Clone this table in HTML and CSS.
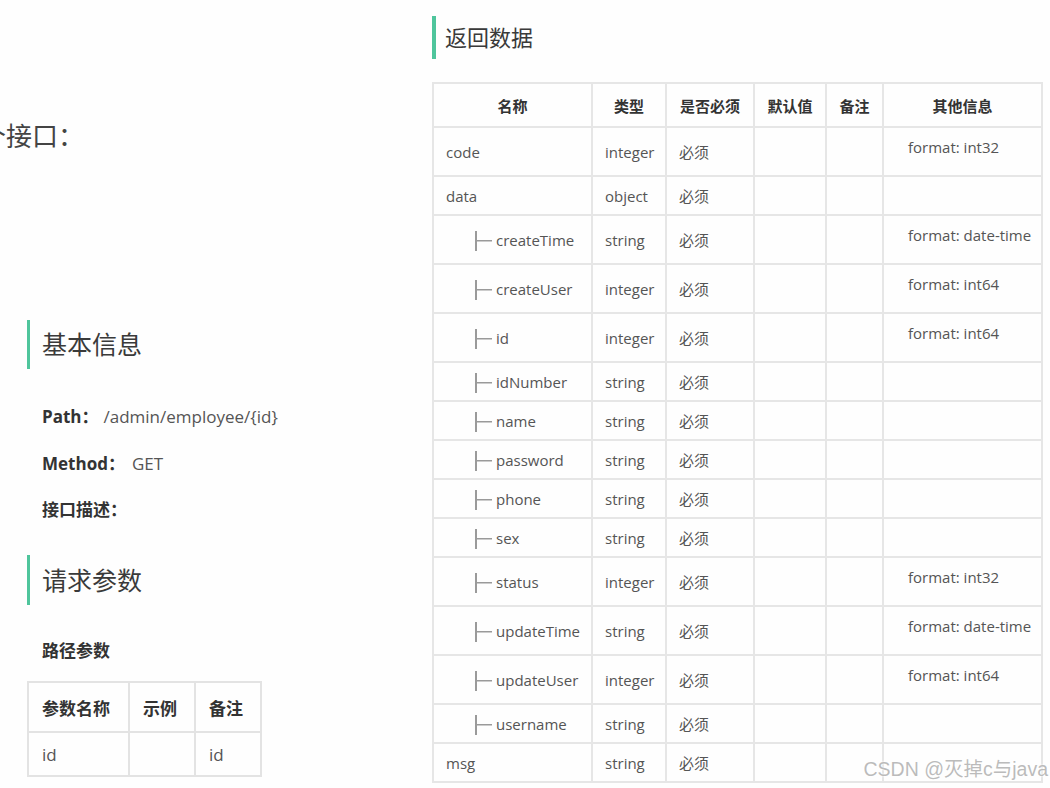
FILE: index.html
```html
<!DOCTYPE html>
<html lang="zh">
<head>
<meta charset="utf-8">
<title>接口文档</title>
<link rel="stylesheet" href="styles.css">
</head>
<body>
<div class="page">
  <div class="left">
    <div class="title">个接口：</div>

    <h2 class="sec sec-basic">基本信息</h2>
    <div class="info">
      <div class="info-row"><span class="label">Path：</span><span class="value value-p">/admin/employee/{id}</span></div>
      <div class="info-row"><span class="label">Method：</span><span class="value value-m">GET</span></div>
      <div class="info-row"><span class="label">接口描述：</span></div>
    </div>

    <h2 class="sec sec-req">请求参数</h2>
    <div class="sub">路径参数</div>
    <table class="ltable">
      <colgroup><col class="lc1"><col class="lc2"><col class="lc3"></colgroup>
      <thead><tr><th>参数名称</th><th>示例</th><th>备注</th></tr></thead>
      <tbody><tr><td>id</td><td></td><td>id</td></tr></tbody>
    </table>
  </div>

  <div class="right">
    <h2 class="rsec">返回数据</h2>
    <table class="rtable">
      <colgroup>
        <col class="c1"><col class="c2"><col class="c3"><col class="c4"><col class="c5"><col class="c6">
      </colgroup>
      <thead>
        <tr><th>名称</th><th>类型</th><th>是否必须</th><th>默认值</th><th>备注</th><th>其他信息</th></tr>
      </thead>
      <tbody>
        <tr class="tall"><td>code</td><td>integer</td><td>必须</td><td></td><td></td><td class="fmt"><div class="fmt-in">format: int32</div></td></tr>
        <tr class="short"><td>data</td><td>object</td><td>必须</td><td></td><td></td><td></td></tr>
        <tr class="tall"><td><span class="tree"></span>createTime</td><td>string</td><td>必须</td><td></td><td></td><td class="fmt"><div class="fmt-in">format: date-time</div></td></tr>
        <tr class="tall"><td><span class="tree"></span>createUser</td><td>integer</td><td>必须</td><td></td><td></td><td class="fmt"><div class="fmt-in">format: int64</div></td></tr>
        <tr class="tall"><td><span class="tree"></span>id</td><td>integer</td><td>必须</td><td></td><td></td><td class="fmt"><div class="fmt-in">format: int64</div></td></tr>
        <tr class="short"><td><span class="tree"></span>idNumber</td><td>string</td><td>必须</td><td></td><td></td><td></td></tr>
        <tr class="short"><td><span class="tree"></span>name</td><td>string</td><td>必须</td><td></td><td></td><td></td></tr>
        <tr class="short"><td><span class="tree"></span>password</td><td>string</td><td>必须</td><td></td><td></td><td></td></tr>
        <tr class="short"><td><span class="tree"></span>phone</td><td>string</td><td>必须</td><td></td><td></td><td></td></tr>
        <tr class="short"><td><span class="tree"></span>sex</td><td>string</td><td>必须</td><td></td><td></td><td></td></tr>
        <tr class="tall"><td><span class="tree"></span>status</td><td>integer</td><td>必须</td><td></td><td></td><td class="fmt"><div class="fmt-in">format: int32</div></td></tr>
        <tr class="tall"><td><span class="tree"></span>updateTime</td><td>string</td><td>必须</td><td></td><td></td><td class="fmt"><div class="fmt-in">format: date-time</div></td></tr>
        <tr class="tall"><td><span class="tree"></span>updateUser</td><td>integer</td><td>必须</td><td></td><td></td><td class="fmt"><div class="fmt-in">format: int64</div></td></tr>
        <tr class="short"><td><span class="tree"></span>username</td><td>string</td><td>必须</td><td></td><td></td><td></td></tr>
        <tr class="short"><td>msg</td><td>string</td><td>必须</td><td></td><td></td><td></td></tr>
      </tbody>
    </table>
  </div>
</div>
<div class="watermark">CSDN @灭掉c与java</div>
</body>
</html>
```

FILE: styles.css
```css
html, body {
  margin: 0;
  padding: 0;
  background: #fefefe;
}
body {
  font-family: "Open Sans", "Noto Sans CJK SC", sans-serif;
  color: #555;
  width: 1050px;
  height: 788px;
  overflow: hidden;
  position: relative;
}
.page {
  display: flex;
  align-items: flex-start;
}
.left {
  width: 432px;
  box-sizing: border-box;
  padding-left: 27px;
  font-size: 17px;
}
.title {
  font-size: 26px;
  line-height: 36px;
  color: #444;
  margin-top: 118px;
  margin-left: -47px;
}
.sec {
  margin: 0;
  font-weight: normal;
  font-size: 25px;
  color: #3a3a3a;
  border-left: 3px solid #4fc59c;
  padding-left: 12px;
  height: 49px;
  line-height: 49px;
  box-sizing: border-box;
}
.sec-basic { margin-top: 166px; }
.sec-req { margin-top: 32px; height: 50px; line-height: 50px; }
.info { margin-top: 35px; padding-left: 15px; }
.info-row {
  line-height: 26px;
  height: 26px;
  margin-bottom: 20.5px;
}
.info-row:last-child { margin-bottom: 0; }
.label { font-weight: bold; color: #333; }
.value { color: #555; }
.value-p { margin-left: 5px; }
.value-m { margin-left: 7px; }
.sub {
  margin-top: 33px;
  padding-left: 15px;
  font-weight: bold;
  color: #333;
  line-height: 26px;
}
.ltable {
  margin-top: 17px;
  border-collapse: collapse;
  table-layout: fixed;
  width: 233px;
}
.lc1 { width: 101px; }
.lc2 { width: 66px; }
.lc3 { width: 66px; }
.ltable th, .ltable td {
  border: 2px solid #e3e3e3;
  text-align: left;
  padding: 0 13px;
  font-size: 17px;
}
.ltable th { height: 48px; color: #333; }
.ltable td { height: 42px; color: #555; }

.right {
  width: 609px;
}
.rsec {
  margin: 16px 0 0 0;
  font-weight: normal;
  font-size: 22px;
  color: #3a3a3a;
  border-left: 4px solid #4fc59c;
  padding-left: 9px;
  height: 43px;
  line-height: 43px;
}
.rtable {
  margin-top: 23px;
  border-collapse: collapse;
  table-layout: fixed;
  width: 609px;
  font-size: 15px;
}
.c1 { width: 159px; }
.c2 { width: 74px; }
.c3 { width: 88px; }
.c4 { width: 72px; }
.c5 { width: 57px; }
.c6 { width: 159px; }
.rtable th, .rtable td {
  border: 2px solid #e6e6e6;
  padding: 0 0 0 12px;
  white-space: nowrap;
  overflow: hidden;
}
.rtable th {
  height: 42px;
  text-align: center;
  padding: 0;
  color: #333;
  font-weight: bold;
}
.rtable td {
  color: #555;
  vertical-align: middle;
  line-height: 22px;
}
.rtable tr.tall td { height: 47px; }
.rtable tr.short td { height: 37px; }
.rtable td.fmt {
  vertical-align: top;
  padding-left: 24px;
}
.fmt-in { margin-top: 8px; }
.tree {
  display: inline-block;
  width: 17px;
  height: 20px;
  margin-left: 29px;
  margin-right: 4px;
  vertical-align: -5px;
  border-left: 2px solid #9a9a9a;
  box-sizing: border-box;
  background: linear-gradient(#9a9a9a, #9a9a9a) no-repeat 0 9px / 100% 1.5px;
}
.watermark {
  position: absolute;
  right: 2px;
  bottom: 6px;
  font-family: "Liberation Sans", "Noto Sans CJK SC", sans-serif;
  font-size: 19.5px;
  color: rgba(175, 175, 175, 0.85);
  text-shadow: 0 0 2px #fff, 0 0 2px #fff;
}
```
